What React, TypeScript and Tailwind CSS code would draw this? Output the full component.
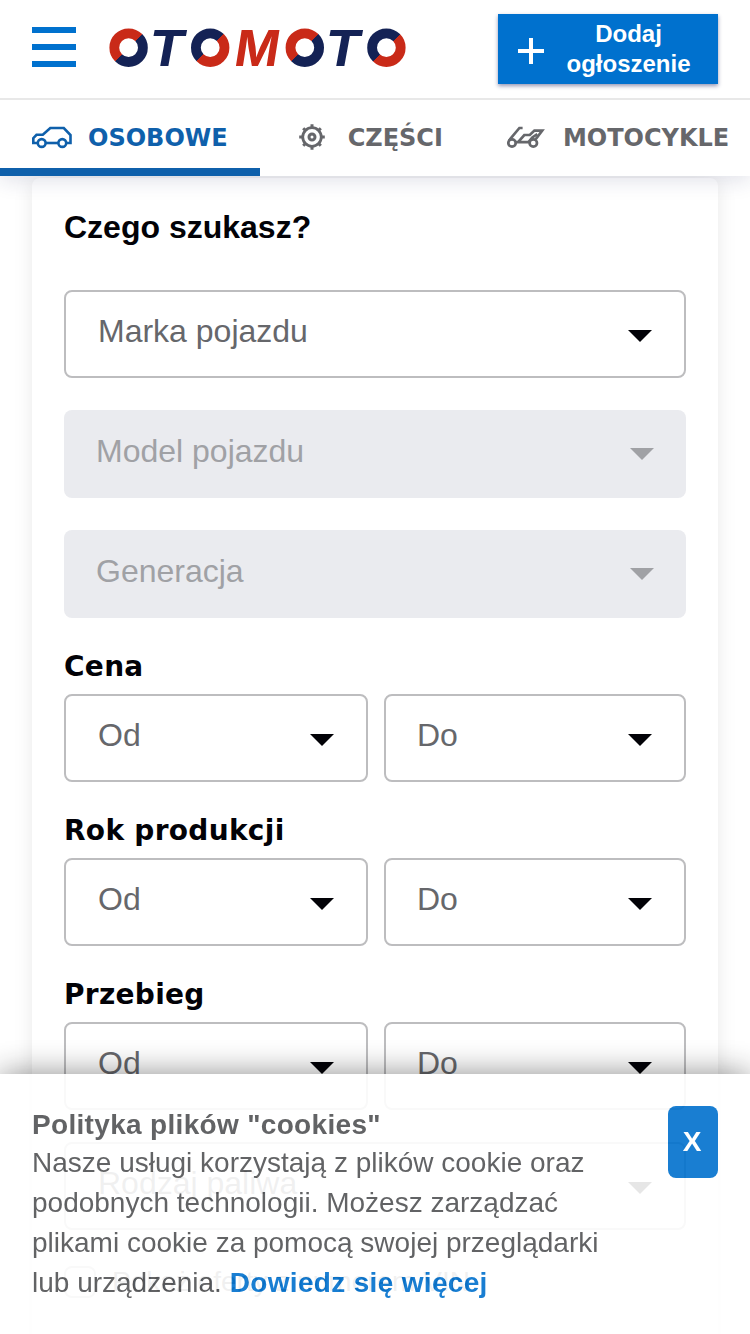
import type { ReactNode } from "react";
import clsx from "clsx";

const RANGES = ["Cena", "Rok produkcji", "Przebieg"];

const RINGS = [
  { cx: 19.6, fill: "url(#ring-red-navy)" },
  { cx: 101.2, fill: "url(#ring-navy-red)" },
  { cx: 195.8, fill: "url(#ring-red-navy)" },
  { cx: 277.4, fill: "url(#ring-navy-red)" },
];

function Logo() {
  return (
    <svg
      width="298"
      height="66"
      viewBox="0 -12 298 66"
      role="img"
      aria-label="OTOMOTO"
      className="font-['Inter',sans-serif] text-[49px] font-bold italic"
    >
      <defs>
        <linearGradient id="ring-red-navy" x1="0" y1="0" x2="1" y2="1">
          <stop offset="0.5" stopColor="#c92a18" />
          <stop offset="0.5" stopColor="#142255" />
        </linearGradient>
        <linearGradient id="ring-navy-red" x1="0" y1="0" x2="1" y2="1">
          <stop offset="0.5" stopColor="#142255" />
          <stop offset="0.5" stopColor="#c92a18" />
        </linearGradient>
      </defs>
      {RINGS.map((r) => (
        <circle key={r.cx} cx={r.cx} cy="20.7" r="14.3" fill="none" stroke={r.fill} strokeWidth="9.8" />
      ))}
      <text x="39.5" y="38.5" fill="#142255" textLength="36.5" lengthAdjust="spacingAndGlyphs">T</text>
      <text x="126" y="38.5" fill="#c92a18" textLength="44" lengthAdjust="spacingAndGlyphs">M</text>
      <text x="215.5" y="38.5" fill="#142255" textLength="36.5" lengthAdjust="spacingAndGlyphs">T</text>
    </svg>
  );
}

function CarIcon() {
  return (
    <svg width="40" height="24" viewBox="0 0 40 24" fill="none" stroke="currentColor" strokeWidth="2.6">
      <path d="M5.5 18H1.3v-4.8l3.2-3.4h6.3L18.3 3h13.5l6.7 7v8H35" />
      <path d="M14 18h12" />
      <circle cx="9.7" cy="18" r="3.9" />
      <circle cx="30.3" cy="18" r="3.9" />
    </svg>
  );
}

function GearIcon() {
  return (
    <svg width="40" height="28" viewBox="0 0 40 28" fill="none" stroke="currentColor">
      <circle cx="20" cy="14" r="9.3" strokeWidth="2.8" />
      <circle cx="20" cy="14" r="3" strokeWidth="3" />
      <path
        d="M20 1.2v3M20 23.8v3M7.2 14h3M29.8 14h3M11.2 5.2l2 2M26.8 20.8l2 2M28.8 5.2l-2 2M13.2 20.8l-2 2"
        strokeWidth="3"
      />
    </svg>
  );
}

function MotorcycleIcon() {
  return (
    <svg width="40" height="24" viewBox="0 0 40 24" fill="none" stroke="currentColor" strokeWidth="2.7">
      <circle cx="5" cy="18" r="3.7" />
      <circle cx="26.3" cy="18" r="3.7" />
      <path d="M15.6 3h-3.2L2 15.5" />
      <path d="M9 17.2h13.2M11.5 16.6l5.8-6.6h5.5l4.6-4.4h7.8l-6.5 8.6" />
      <path d="M21.5 17l3.8-4.6 5-3.2" />
    </svg>
  );
}

function Tab({ icon, label, active }: { icon: ReactNode; label: string; active?: boolean }) {
  return (
    <a
      className={clsx(
        "flex h-[76px] shrink-0 items-center gap-4 border-b-8 px-8",
        active ? "border-[#0f60ab] text-[#0f60ab]" : "border-transparent text-[#66676b]"
      )}
    >
      <span className="pt-1.5">{icon}</span>
      <span className="pt-2 font-['DejaVu_Sans',sans-serif] text-2xl leading-8 font-bold">{label}</span>
    </a>
  );
}

function Caret() {
  return (
    <svg width="24" height="12" viewBox="0 0 24 12" fill="currentColor">
      <path d="M0 0h24L12 12z" />
    </svg>
  );
}

function Select({ label, disabled, className }: { label: string; disabled?: boolean; className?: string }) {
  return (
    <div
      className={clsx(
        "flex h-[88px] items-start justify-between rounded-lg px-8 text-[32px] leading-10",
        disabled ? "bg-[#eaebef] pt-[21px] text-[#a0a1a5]" : "border-2 border-[#bdbdbf] pt-[19px] text-[#66676b]",
        className
      )}
    >
      <span>{label}</span>
      <span className={clsx(disabled ? "pt-[17px]" : "pt-[19px] text-[#020207]")}>
        <Caret />
      </span>
    </div>
  );
}

function Header() {
  return (
    <header className="relative z-10 bg-white shadow-[0_4px_20px_rgba(30,35,90,0.14)]">
      <div className="flex h-[100px] items-start border-b-2 border-[#e8e8e8] px-8 pt-3.5">
        <button className="mt-[13px] flex h-10 w-11 flex-col justify-between" aria-label="Menu">
          <span className="h-1.5 w-full bg-[#0071ce]" />
          <span className="h-1.5 w-full bg-[#0071ce]" />
          <span className="h-1.5 w-full bg-[#0071ce]" />
        </button>
        <div className="mt-px ml-[33px]">
          <Logo />
        </div>
        <button className="ml-auto flex h-[70px] w-[220px] items-center bg-[#0071ce] pl-5 text-2xl leading-[30px] font-bold text-white shadow-[0_2px_4px_rgba(20,25,90,0.45)]">
          <svg width="26" height="26" viewBox="0 0 26 26" stroke="white" strokeWidth="4" className="mt-[3px]">
            <path d="M13 0v26M0 13h26" />
          </svg>
          <span className="ml-[22px] w-[125px] text-center">Dodaj ogłoszenie</span>
        </button>
      </div>
      <nav className="flex overflow-hidden">
        <Tab icon={<CarIcon />} label="OSOBOWE" active />
        <Tab icon={<GearIcon />} label="CZĘŚCI" />
        <Tab icon={<MotorcycleIcon />} label="MOTOCYKLE" />
      </nav>
    </header>
  );
}

function SearchForm() {
  return (
    <main className="mx-8 mt-[2px] h-[1200px] rounded-lg bg-white px-8 pt-[29px] shadow-[0_0_20px_rgba(0,0,0,0.09)]">
      <h1 className="text-[32px] leading-10 font-bold text-[#020207]">Czego szukasz?</h1>
      <div className="mt-[43px] flex flex-col gap-8">
        <Select label="Marka pojazdu" />
        <Select label="Model pojazdu" disabled />
        <Select label="Generacja" disabled />
      </div>
      {RANGES.map((name) => (
        <section key={name} className="mt-8">
          <h2 className="h-11 pt-px font-['DejaVu_Sans',sans-serif] text-[28px] leading-8 font-bold tracking-[0.3px] text-[#020207]">
            {name}
          </h2>
          <div className="flex gap-4">
            <Select label="Od" className="w-[304px]" />
            <Select label="Do" className="w-[302px] pl-[31px]" />
          </div>
        </section>
      ))}
      <Select label="Rodzaj paliwa" className="mt-8" />
      <label className="mt-9 flex items-center gap-4 text-[28px] leading-8 text-[#66676b]">
        <span className="size-8 rounded-lg border-2 border-[#bdbdbf]" />
        Pokaż oferty z numerem VIN
      </label>
    </main>
  );
}

// Translucent bar, the end of the form stays faintly visible under it
function CookieBar() {
  return (
    <div className="fixed inset-x-0 bottom-0 z-20 flex h-[260px] items-start justify-between bg-white px-8 pt-8 text-[28px] text-[#525355] opacity-90 shadow-[0_0_30px_rgba(0,0,0,0.5)]">
      <div className="w-[590px]">
        <p className="h-[37px] leading-[38px] font-bold tracking-[0.32px]">Polityka plików "cookies"</p>
        <p className="leading-10">
          Nasze usługi korzystają z plików cookie oraz podobnych technologii. Możesz zarządzać plikami cookie za
          pomocą swojej przeglądarki lub urządzenia.{" "}
          <a className="font-bold tracking-[0.33px] text-[#0071ce]">Dowiedz się więcej</a>
        </p>
      </div>
      <button className="h-[72px] w-[50px] rounded-lg bg-[#0071ce] pr-0.5 font-bold text-white">X</button>
    </div>
  );
}

export default function App() {
  return (
    <div className="h-[1334px] overflow-hidden bg-white font-['Liberation_Sans',sans-serif]">
      <Header />
      <SearchForm />
      <CookieBar />
    </div>
  );
}
